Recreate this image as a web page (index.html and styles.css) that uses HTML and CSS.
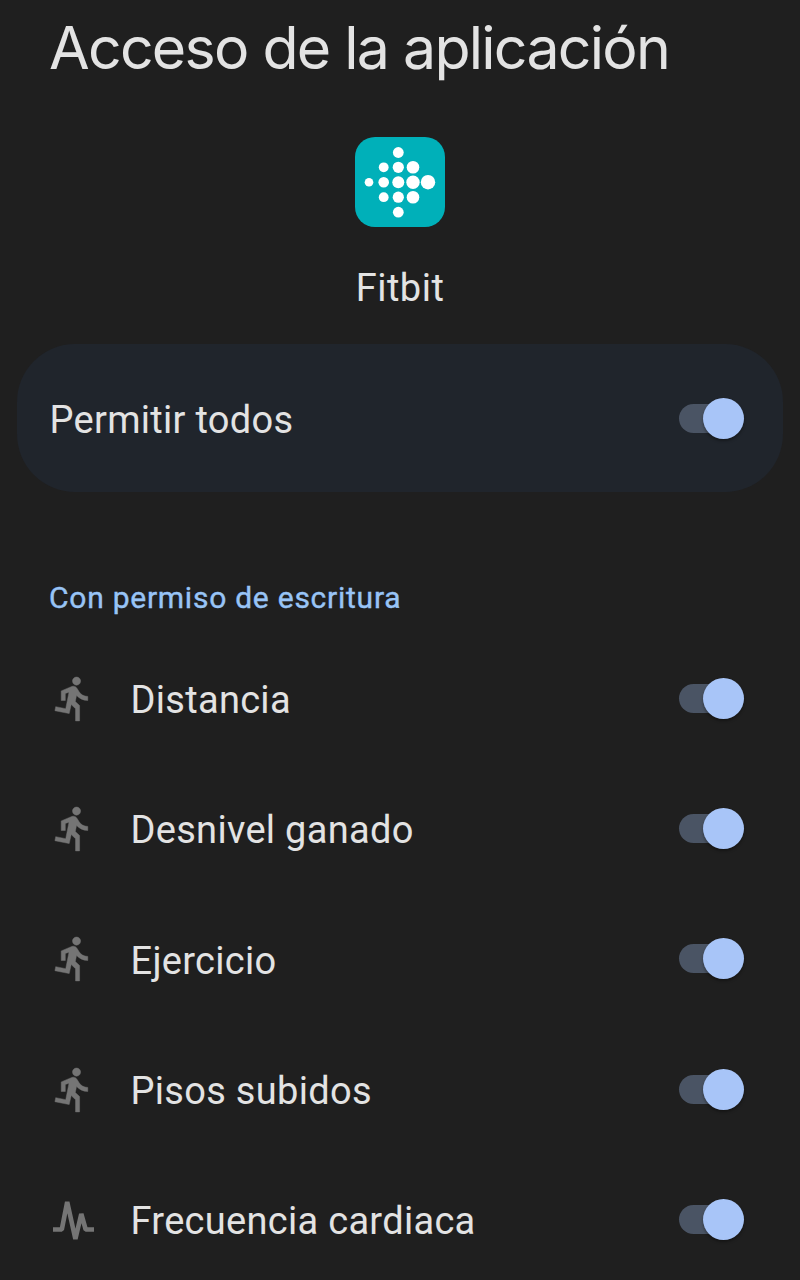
FILE: index.html
```html
<!DOCTYPE html>
<html lang="es">
<head>
<meta charset="utf-8">
<title>Acceso de la aplicación</title>
<link rel="stylesheet" href="styles.css">
</head>
<body>
<svg class="defs" width="0" height="0">
  <symbol id="run" viewBox="0 0 24 24"><path stroke="currentColor" stroke-width="0.22" d="M13.49 5.48c1.1 0 2-.9 2-2s-.9-2-2-2-2 .9-2 2 .9 2 2 2zm-3.6 13.9l1-4.4 2.1 2v6h2v-7.5l-2.1-2 .6-3c1.3 1.5 3.3 2.5 5.5 2.5v-2c-1.9 0-3.5-1-4.3-2.4l-1-1.6c-.4-.6-1-1-1.7-1-.3 0-.5.1-.8.1l-5.2 2.2v4.7h2v-3.4l1.8-.7-1.6 8.1-4.9-1-.4 2 7 1.4z"/></symbol>
  <symbol id="pulse" viewBox="0 0 49 49"><path d="M4 34.5h8.8L18.2 7l8.2 37 5.9-25 4.4 15.5H45" fill="none" stroke="currentColor" stroke-width="4.6" stroke-linejoin="bevel"/></symbol>
</svg>
<main class="screen">
  <h1 class="title">Acceso de la aplicación</h1>
  <section class="app">
    <svg class="app-icon" viewBox="0 0 90 90">
      <rect width="90" height="90" rx="20" fill="#00b0b9"/>
      <g fill="#fff">
        <circle cx="43.3" cy="15.5" r="5.4"/>
        <circle cx="28.7" cy="30.3" r="4.9"/><circle cx="43.3" cy="30.3" r="5.6"/><circle cx="58" cy="30.3" r="6.3"/>
        <circle cx="14" cy="45.2" r="4.3"/><circle cx="28.7" cy="45.2" r="5.3"/><circle cx="43.3" cy="45.2" r="6"/><circle cx="58" cy="45.2" r="6.7"/><circle cx="73" cy="45.2" r="7.2"/>
        <circle cx="28.7" cy="60.2" r="4.9"/><circle cx="43.3" cy="60.2" r="5.6"/><circle cx="58" cy="60.2" r="6.3"/>
        <circle cx="43.3" cy="75.2" r="5.4"/>
      </g>
    </svg>
    <p class="app-name">Fitbit</p>
  </section>
  <section class="allow-all"><span class="label">Permitir todos</span><span class="switch"></span></section>
  <h2 class="subtitle">Con permiso de escritura</h2>
  <ul class="list">
    <li class="row"><svg class="icon"><use href="#run"/></svg><span class="label">Distancia</span><span class="switch"></span></li>
    <li class="row"><svg class="icon"><use href="#run"/></svg><span class="label">Desnivel ganado</span><span class="switch"></span></li>
    <li class="row"><svg class="icon"><use href="#run"/></svg><span class="label">Ejercicio</span><span class="switch"></span></li>
    <li class="row"><svg class="icon"><use href="#run"/></svg><span class="label">Pisos subidos</span><span class="switch"></span></li>
    <li class="row"><svg class="icon"><use href="#pulse"/></svg><span class="label">Frecuencia cardiaca</span><span class="switch"></span></li>
  </ul>
</main>
</body>
</html>
```
FILE: styles.css
```css
* { box-sizing: border-box; margin: 0; padding: 0; }
body { background: #1f1f1f; color: #e3e3e3; font-family: Roboto, sans-serif; }
.defs { display: block; }
.screen { height: 1280px; overflow: hidden; }
.title { height: 137px; padding: 12px 0 0 49px; font: 400 59px/72px Inter, sans-serif; letter-spacing: -1.75px; white-space: nowrap; }
.app { height: 207px; display: flex; flex-direction: column; align-items: center; }
.app-icon { width: 90px; height: 90px; }
.app-name { margin-top: 37px; font-size: 38px; line-height: 48px; letter-spacing: 0.5px; }
.allow-all { height: 148px; margin: 0 17px; padding: 0 39px 0 32px; border-radius: 58px; background: #20252c; display: flex; align-items: center; }
.label { flex: 1; font-size: 38px; line-height: 48px; letter-spacing: 0.3px; padding: 4px 0 0 0.5px; white-space: nowrap; }
.switch { width: 65px; height: 41px; display: flex; align-items: center; justify-content: flex-end; }
.switch::before { content: ""; width: 48px; height: 29px; margin-right: -24px; border-radius: 15px; background: #4a5464; }
.switch::after { content: ""; width: 41px; height: 41px; border-radius: 50%; background: #a8c5f8; box-shadow: 0 2px 3px rgba(0, 0, 0, 0.35); position: relative; }
.subtitle { height: 141px; padding: 86px 0 0 49px; font: 400 30px/40px Roboto, sans-serif; letter-spacing: 0.75px; -webkit-text-stroke: 0.4px #98c4f6; color: #98c4f6; }
.list { list-style: none; }
.row { height: 130.3px; padding: 0 56px 0 49px; display: flex; align-items: center; }
.icon { width: 49px; height: 49px; margin-right: 32px; fill: #757575; color: #757575; }
```
